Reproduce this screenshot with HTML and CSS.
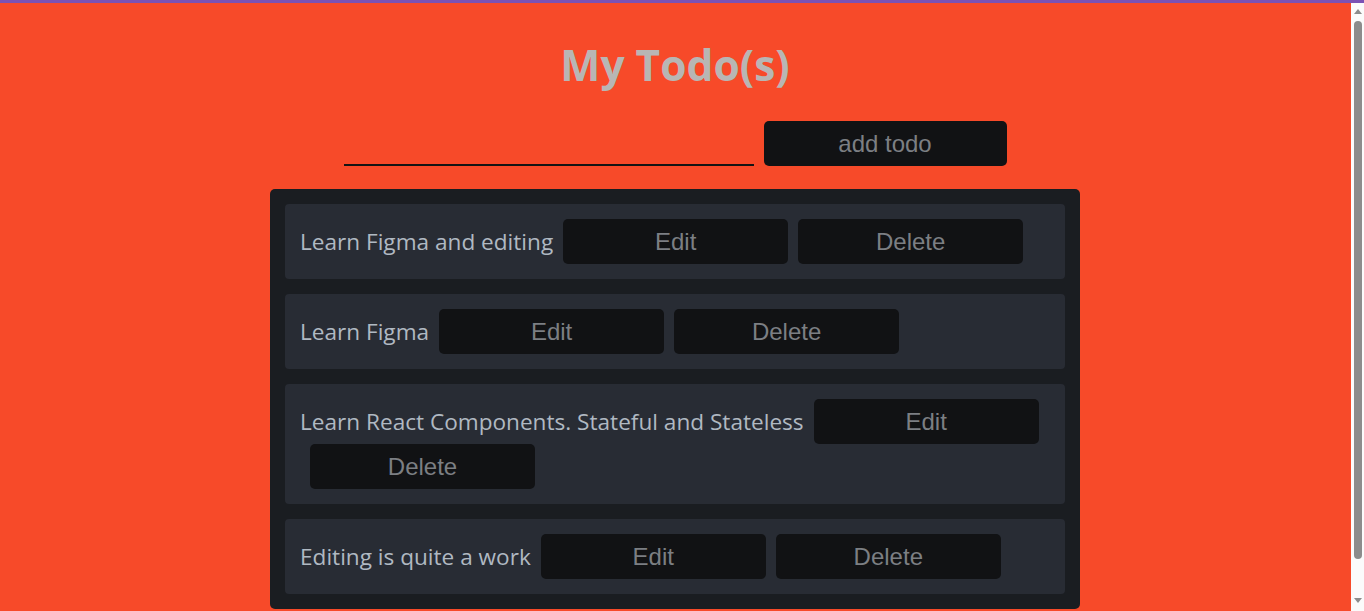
FILE: index.html
```html
<!DOCTYPE html>
<html lang="en">
<head>
<meta charset="utf-8">
<title>My Todo(s)</title>
<link rel="stylesheet" href="styles.css">
</head>
<body>
<div class="app">
  <h1 class="title">My Todo(s)</h1>
  <form class="add-form">
    <input class="add-input" type="text">
    <button class="btn add-btn" type="button">add todo</button>
  </form>
  <ul class="todo-list">
    <li class="todo">
      <span class="todo-text">Learn Figma and editing</span>
      <button class="btn" type="button">Edit</button>
      <button class="btn" type="button">Delete</button>
    </li>
    <li class="todo">
      <span class="todo-text">Learn Figma</span>
      <button class="btn" type="button">Edit</button>
      <button class="btn" type="button">Delete</button>
    </li>
    <li class="todo">
      <span class="todo-text">Learn React Components. Stateful and Stateless</span>
      <button class="btn" type="button">Edit</button>
      <button class="btn" type="button">Delete</button>
    </li>
    <li class="todo">
      <span class="todo-text">Editing is quite a work</span>
      <button class="btn" type="button">Edit</button>
      <button class="btn" type="button">Delete</button>
    </li>
  </ul>
</div>
<div class="scrollbar" aria-hidden="true">
  <span class="sb-arrow sb-up"></span>
  <span class="sb-thumb"></span>
  <span class="sb-arrow sb-down"></span>
</div>
</body>
</html>
```

FILE: styles.css
```css
body {
  margin: 0;
  background: #f74a29;
  border-top: 3px solid #7b52b4;
  font-family: "Open Sans", "Noto Sans", sans-serif;
}

.app {
  display: flex;
  flex-direction: column;
  align-items: center;
  padding-right: 14px;
}

.title {
  margin: 32px 0 0;
  font-size: 42.5px;
  font-weight: 700;
  line-height: 60px;
  color: #b8b6b4;
}

.add-form {
  display: flex;
  align-items: flex-end;
  gap: 10px;
  margin-top: 26px;
}

.add-input {
  width: 410px;
  height: 30px;
  box-sizing: border-box;
  border: none;
  border-bottom: 2px solid #141414;
  background: transparent;
  outline: none;
  padding: 0;
}

.btn {
  width: 225px;
  height: 45px;
  border: none;
  border-radius: 5px;
  background: #111214;
  color: #7c7f83;
  font-family: "Liberation Sans", Arial, sans-serif;
  font-size: 24px;
  padding: 0;
}

.add-btn {
  width: 243px;
}

.todo-list {
  list-style: none;
  margin: 23px 0 46px;
  padding: 15px;
  width: 810px;
  box-sizing: border-box;
  background: #1a1d21;
  border-radius: 5px;
  display: flex;
  flex-direction: column;
  gap: 15px;
}

.todo {
  display: flex;
  flex-wrap: wrap;
  align-items: center;
  padding: 15px;
  background: #282c34;
  border-radius: 4px;
}

.todo .btn {
  margin-left: 10px;
}

.todo-text {
  color: #b0b9c2;
  font-size: 22.6px;
  line-height: 31px;
}

/* imitation of the browser's vertical scrollbar */
.scrollbar {
  position: fixed;
  top: 3px;
  right: 0;
  bottom: 0;
  width: 13px;
  background: #fbfbfb;
}

.sb-arrow {
  position: absolute;
  left: 3px;
  width: 0;
  height: 0;
  border-left: 4px solid transparent;
  border-right: 4px solid transparent;
}

.sb-up {
  top: 6px;
  border-bottom: 5px solid #8c8c8c;
}

.sb-down {
  bottom: 8px;
  border-top: 5px solid #8c8c8c;
}

.sb-thumb {
  position: absolute;
  left: 3px;
  top: 18px;
  width: 8px;
  height: 538px;
  border-radius: 4px;
  background: #8c8c8c;
}
```
